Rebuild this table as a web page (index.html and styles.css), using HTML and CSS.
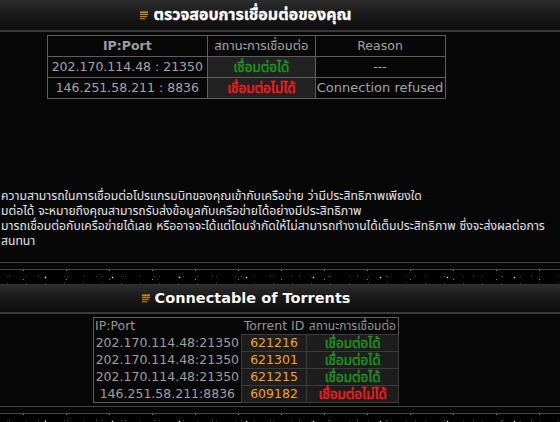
FILE: index.html
```html
<!DOCTYPE html>
<html lang="th">
<head>
<meta charset="utf-8">
<title>ตรวจสอบการเชื่อมต่อ</title>
<link rel="stylesheet" href="styles.css">
</head>
<body>
<div class="page">
  <div class="bar bar-first">
    <div class="title">
      <svg class="ico" width="8" height="9" viewBox="0 0 8 9" aria-hidden="true">
        <rect x="0" y="0.5" width="8" height="1.3" fill="#e9a13a"/>
        <rect x="0" y="2.7" width="8" height="1.3" fill="#d98c24"/>
        <rect x="0" y="4.9" width="7" height="1.3" fill="#c97c1c"/>
        <rect x="0" y="7.1" width="5" height="1.3" fill="#b86c14"/>
      </svg>
      <span class="th-title">ตรวจสอบการเชื่อมต่อของคุณ</span>
    </div>
  </div>

  <table class="t1">
    <colgroup><col class="c1"><col class="c2"><col class="c3"></colgroup>
    <tr><th class="bold">IP:Port</th><th class="thai">สถานะการเชื่อมต่อ</th><th>Reason</th></tr>
    <tr><td>202.170.114.48 : 21350</td><td class="st ok">เชื่อมต่อได้</td><td>---</td></tr>
    <tr><td>146.251.58.211 : 8836</td><td class="st bad">เชื่อมต่อไม่ได้</td><td class="reason">Connection refused</td></tr>
  </table>

  <div class="desc">
    <div class="ln">ความสามารถในการเชื่อมต่อโปรแกรมบิทของคุณเข้ากับเครือข่าย ว่ามีประสิทธิภาพเพียงใด</div>
    <div class="ln">มต่อได้ จะหมายถึงคุณสามารถรับส่งข้อมูลกับเครือข่ายได้อย่างมีประสิทธิภาพ</div>
    <div class="ln">มารถเชื่อมต่อกับเครือข่ายได้เลย หรืออาจจะได้แต่โดนจำกัดให้ไม่สามารถทำงานได้เต็มประสิทธิภาพ ซึ่งจะส่งผลต่อการ</div>
    <div class="ln">สนทนา</div>
  </div>

  <div class="sep"></div>
  <div class="stars"></div>

  <div class="bar">
    <div class="title">
      <svg class="ico" width="8" height="9" viewBox="0 0 8 9" aria-hidden="true">
        <rect x="0" y="0.5" width="8" height="1.3" fill="#e9a13a"/>
        <rect x="0" y="2.7" width="8" height="1.3" fill="#d98c24"/>
        <rect x="0" y="4.9" width="7" height="1.3" fill="#c97c1c"/>
        <rect x="0" y="7.1" width="5" height="1.3" fill="#b86c14"/>
      </svg>
      <span class="en-title">Connectable of Torrents</span>
    </div>
  </div>

  <table class="t2">
    <colgroup><col class="d1"><col class="d2"><col class="d3"></colgroup>
    <tr><th class="left">IP:Port</th><th>Torrent ID</th><th class="thai">สถานะการเชื่อมต่อ</th></tr>
    <tr><td>202.170.114.48:21350</td><td class="box id">621216</td><td class="box ok">เชื่อมต่อได้</td></tr>
    <tr><td>202.170.114.48:21350</td><td class="box id">621301</td><td class="box ok">เชื่อมต่อได้</td></tr>
    <tr><td>202.170.114.48:21350</td><td class="box id">621215</td><td class="box ok">เชื่อมต่อได้</td></tr>
    <tr><td>146.251.58.211:8836</td><td class="box id">609182</td><td class="box bad">เชื่อมต่อไม่ได้</td></tr>
  </table>

  <div class="sep sep-bottom"></div>
  <div class="stars"></div>
</div>
</body>
</html>
```

FILE: styles.css
```css
html, body {
  margin: 0;
  padding: 0;
  background: #070707;
  overflow: hidden;
}
body {
  font-family: "DejaVu Sans", "Noto Sans Thai", "Noto Sans", sans-serif;
  font-size: 12.5px;
  color: #a8a8a8;
}
.page {
  width: 628px;
  margin-left: -68px;
}
.bar {
  height: 28px;
  background: linear-gradient(#2e2e2e, #1b1b1b 45%, #0c0c0c);
  border-bottom: 2px solid #3a3a3a;
  display: flex;
  align-items: center;
  justify-content: center;
}
.bar-first {
  height: 30px;
}
.title {
  display: flex;
  align-items: center;
  gap: 5px;
  color: #ffffff;
  font-weight: bold;
  text-shadow: 0 0 1px #000;
}
.th-title { font-size: 16px; -webkit-text-stroke: 0.35px #fff; }
.en-title { font-size: 14.5px; }
.ico { display: block; flex: none; }

table {
  border-collapse: collapse;
  margin: 3px auto 0;
}
.t1 {
  width: 399px;
  border: 1px solid #5e5e5e;
}
.t1 .c1 { width: 161px; }
.t1 .c2 { width: 108px; }
.t1 .c3 { width: 130px; }
.t1 th, .t1 td {
  border: 1px solid #5e5e5e;
  padding: 0;
  height: 20px;
  line-height: 20px;
  text-align: center;
  white-space: nowrap;
  font-weight: normal;
  color: #a4a4a4;
}
.t1 th.bold { font-weight: bold; color: #9c9c9c; }
.t1 th.thai { font-size: 13px; }
.t1 td.reason { font-size: 13px; }
.t1 td.st { background: #222222; }
.ok, .bad {
  font-weight: bold;
  font-size: 13.5px;
  -webkit-text-stroke: 0.45px currentColor;
}
.ok { color: #1f951f !important; }
.bad { color: #ff1a1a !important; }

.desc {
  margin: 90px 0 0 69px;
  color: #e4e4e4;
  line-height: 15px;
  font-size: 12.2px;
}
.ln { white-space: nowrap; }

.sep {
  margin-top: 13px;
  height: 6px;
  border-top: 1px solid #444;
  border-bottom: 1px solid #444;
}
.sep-bottom { margin-top: 3px; }
.stars {
  height: 14px;
  background-color: #000;
  background-image:
    radial-gradient(circle, rgba(255,255,255,0.9) 0 0.6px, transparent 1.1px),
    radial-gradient(circle, rgba(190,190,190,0.7) 0 0.5px, transparent 1px),
    radial-gradient(circle, rgba(140,140,140,0.6) 0 0.5px, transparent 1px),
    radial-gradient(circle, rgba(120,120,120,0.5) 0 0.5px, transparent 1px);
  background-size: 67px 11px, 43px 9px, 29px 13px, 19px 7px;
  background-position: 13px 2px, 27px 5px, 5px 0px, 9px 3px;
}

.t2 {
  width: 306px;
  border: 1px solid #5e5e5e;
}
.t2 .d1 { width: 148px; }
.t2 .d2 { width: 66px; }
.t2 .d3 { width: 92px; }
.t2 th, .t2 td {
  padding: 0;
  height: 16px;
  line-height: 16px;
  text-align: center;
  white-space: nowrap;
  font-weight: normal;
  color: #9e9e9e;
}
.t2 th { color: #959595; }
.t2 th.thai { font-size: 12px; }
.t2 th.left { text-align: left; padding-left: 1px; }
.t2 td.box {
  background: #1d1d1d;
  border: 1px solid #3c3c3c;
}
.t2 td.id { color: #f3a41e; }
```
